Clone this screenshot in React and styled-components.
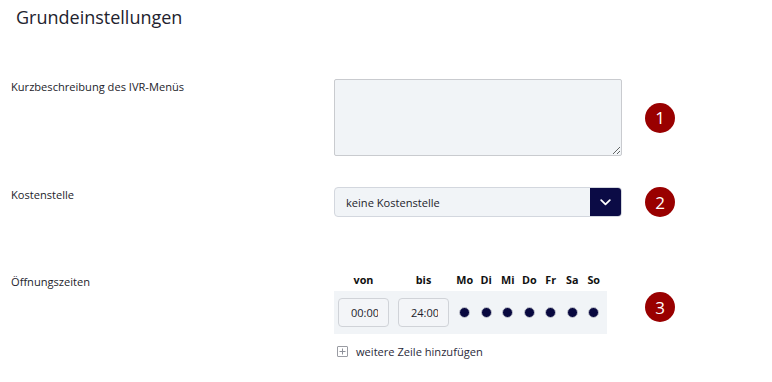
import React from "react";
import styled, { createGlobalStyle } from "styled-components";

const Global = createGlobalStyle`
  html, body { margin: 0; padding: 0; background: #ffffff; }
  body { font-family: "Open Sans", "Noto Sans", sans-serif; color: #1d1d2b; }
  * { box-sizing: border-box; }
`;

const Page = styled.div`
  padding: 4px 0 0 11px;
  width: 772px;
`;

const Heading = styled.h1`
  margin: 0 0 0 5px;
  font-size: 18px;
  line-height: 26px;
  font-weight: 400;
  color: #22222e;
`;

const Row = styled.div`
  display: grid;
  grid-template-columns: 323px 288px auto;
  align-items: start;
  margin-top: ${(p) => p.$top}px;
`;

const Label = styled.div`
  font-size: 11.1px;
  line-height: 16px;
  color: #1d1d2b;
  padding-top: ${(p) => p.$pad || 0}px;
`;

const TextArea = styled.textarea`
  display: block;
  width: 288px;
  height: 77px;
  margin: 0;
  background: #f1f4f7;
  border: 1px solid #c9cbcf;
  border-radius: 2px;
  resize: vertical;
  font-family: inherit;
  outline: none;
`;

const Badge = styled.div`
  margin-left: 23px;
  width: 30px;
  height: 30px;
  border-radius: 50%;
  background: #990000;
  color: #ffffff;
  display: flex;
  align-items: center;
  justify-content: center;
  font-size: 17px;
  line-height: 1;
  align-self: ${(p) => (p.$offset != null ? "start" : "center")};
  margin-top: ${(p) => p.$offset || 0}px;
`;

const Select = styled.div`
  display: flex;
  width: 288px;
  height: 30px;
  border: 1px solid #d3d7de;
  border-radius: 4px;
  background: #f1f4f7;
  overflow: hidden;
`;

const SelectText = styled.div`
  flex: 1;
  display: flex;
  align-items: center;
  padding-left: 11px;
  font-size: 11.1px;
  color: #1d1d2b;
`;

const SelectButton = styled.div`
  width: 31px;
  background: #0b0b45;
  display: flex;
  align-items: center;
  justify-content: center;
`;

const Hours = styled.div`
  width: 273px;
`;

const Grid = styled.div`
  display: grid;
  grid-template-columns: 51px 65px repeat(7, 21.5px);
  padding: 0 0 0 4px;
`;

const HeadCell = styled.div`
  height: 18px;
  width: ${(p) => (p.$wide ? "51px" : "auto")};
  font-size: 10.8px;
  font-weight: 700;
  line-height: 14px;
  text-align: center;
  white-space: nowrap;
  color: #111;
  margin-left: ${(p) => p.$ml || 0}px;
`;

const Band = styled(Grid)`
  background: #f1f4f7;
  height: 43px;
  align-items: center;
`;

const TimeInput = styled.input`
  width: 51px;
  height: 29px;
  margin: 0 0 0 ${(p) => p.$ml || 0}px;
  padding: 0 10px 0 12px;
  border: 1px solid #d0d3d8;
  border-radius: 4px;
  background: #f3f5f8;
  font-family: inherit;
  font-size: 11px;
  color: #1d1d2b;
  outline: none;
`;

const Dot = styled.span`
  justify-self: center;
  width: 11px;
  height: 11px;
  border-radius: 50%;
  background: #08083f;
  border: 1px solid #c9ccd4;
`;

const AddRow = styled.div`
  display: flex;
  align-items: center;
  gap: 8px;
  margin-top: 10px;
  padding-left: 3px;
  font-size: 11.1px;
  color: #2a2a3a;
`;

const PlusBox = styled.span`
  width: 11px;
  height: 11px;
  border: 1px solid #9a9ca3;
  border-radius: 1px;
  display: flex;
  align-items: center;
  justify-content: center;
`;

const days = ["Mo", "Di", "Mi", "Do", "Fr", "Sa", "So"];

export default function App() {
  return (
    <>
      <Global />
      <Page>
        <Heading>Grundeinstellungen</Heading>

        <Row $top={49}>
          <Label>Kurzbeschreibung des IVR-Menüs</Label>
          <TextArea />
          <Badge>1</Badge>
        </Row>

        <Row $top={31}>
          <Label>Kostenstelle</Label>
          <Select>
            <SelectText>keine Kostenstelle</SelectText>
            <SelectButton>
              <svg width="11" height="7" viewBox="0 0 11 7" fill="none">
                <path d="M1.2 1.2 L5.5 5.3 L9.8 1.2" stroke="#fff" strokeWidth="1.8" strokeLinecap="round" strokeLinejoin="round" />
              </svg>
            </SelectButton>
          </Select>
          <Badge>2</Badge>
        </Row>

        <Row $top={56}>
          <Label $pad={1}>Öffnungszeiten</Label>
          <Hours>
            <Grid>
              <HeadCell $wide>von</HeadCell>
              <HeadCell $wide $ml={9}>bis</HeadCell>
              {days.map((d) => (
                <HeadCell key={d}>{d}</HeadCell>
              ))}
            </Grid>
            <Band>
              <TimeInput defaultValue="00:00" />
              <TimeInput defaultValue="24:00" $ml={9} />
              {days.map((d) => (
                <Dot key={d} />
              ))}
            </Band>
            <AddRow>
              <PlusBox>
                <svg width="7" height="7" viewBox="0 0 7 7">
                  <path d="M3.5 0.5 V6.5 M0.5 3.5 H6.5" stroke="#8d9099" strokeWidth="1" />
                </svg>
              </PlusBox>
              weitere Zeile hinzufügen
            </AddRow>
          </Hours>
          <Badge $offset={19}>3</Badge>
        </Row>
      </Page>
    </>
  );
}
